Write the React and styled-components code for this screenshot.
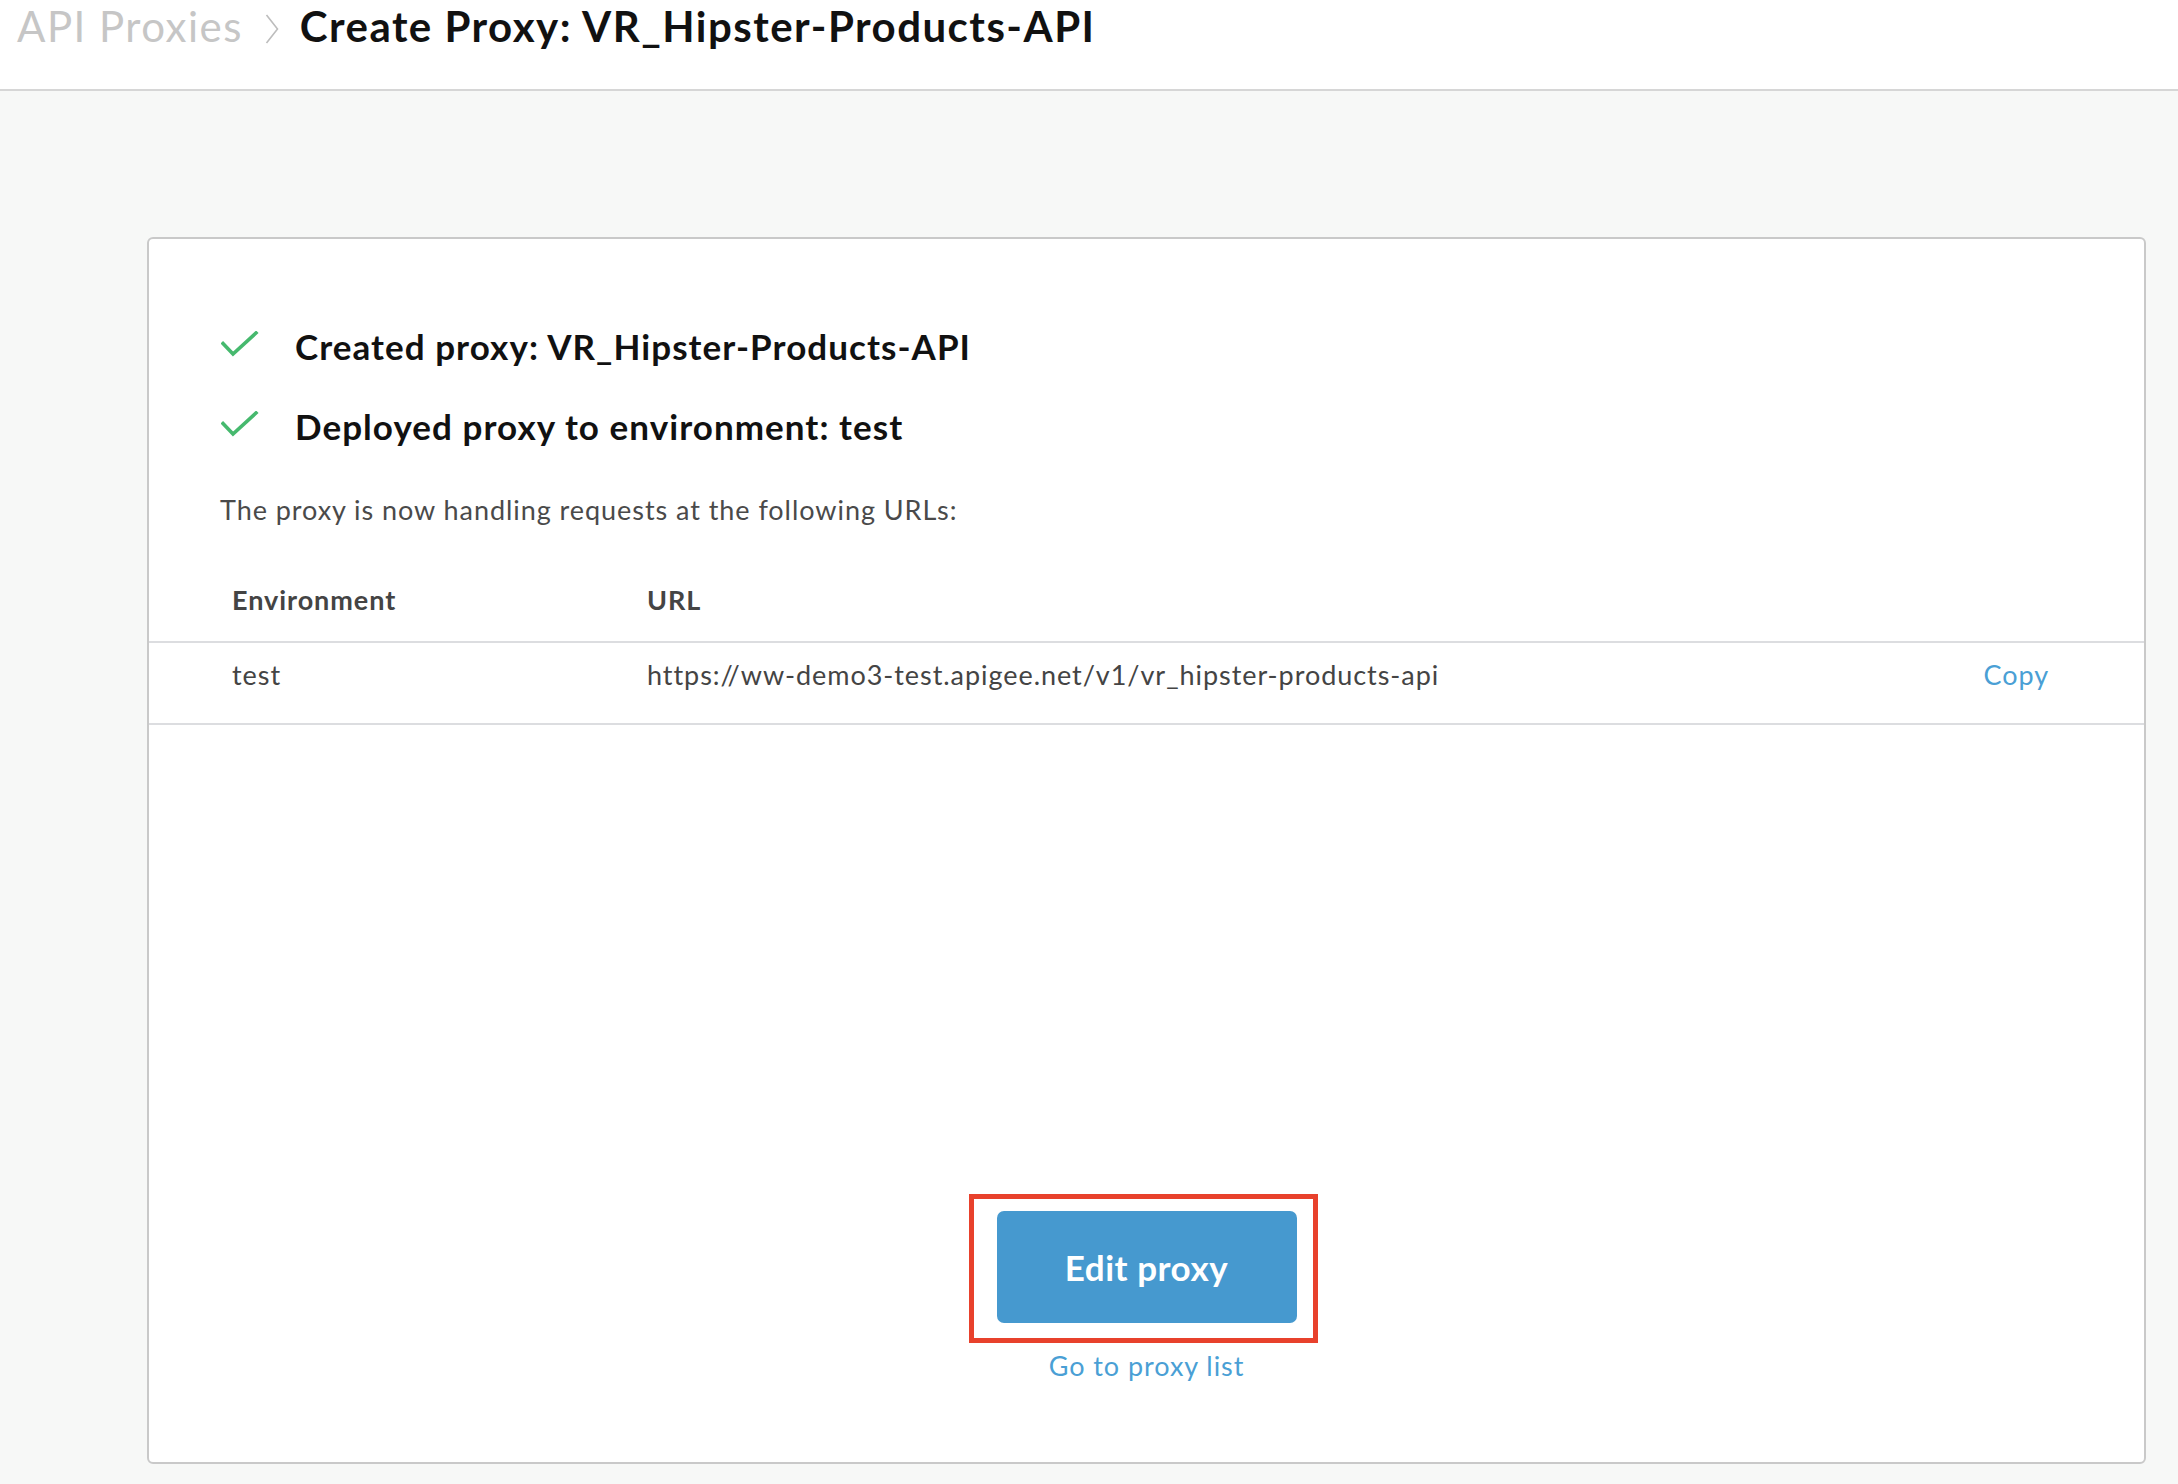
import React from 'react';
import styled, { createGlobalStyle } from 'styled-components';

const GlobalStyle = createGlobalStyle`
  html, body {
    margin: 0;
    padding: 0;
    background: #f7f8f7;
    font-family: Lato, "Open Sans", "Liberation Sans", sans-serif;
  }
  * { box-sizing: border-box; }
`;

const Page = styled.div`
  min-height: 1484px;
  display: flex;
  flex-direction: column;
`;

const Header = styled.header`
  height: 91px;
  background: #fff;
  border-bottom: 2px solid #d6d6d6;
  padding: 1px 0 0 17px;
  display: flex;
  align-items: flex-start;
`;

const Crumb = styled.span`
  font-size: 42px;
  line-height: 1.2;
  letter-spacing: 0.035em;
  font-weight: ${p => (p.current ? 700 : 400)};
  color: ${p => (p.current ? '#111' : '#c6c6c6')};
  white-space: nowrap;
`;

const Chevron = styled.svg`
  width: 14px;
  height: 30px;
  margin: 13px 21px 0 22px;
  flex: none;
`;

const Card = styled.section`
  margin: 146px 32px 21px 147px;
  height: 1227px;
  background: #fff;
  border: 2px solid #c9c9c9;
  border-radius: 6px;
  display: flex;
  flex-direction: column;
`;

const Status = styled.div`
  padding: 83px 0 0 71px;
  display: flex;
  flex-direction: column;
  gap: 32px;
`;

const StatusRow = styled.div`
  display: flex;
  align-items: center;
  gap: 34px;
`;

const Check = styled.svg`
  width: 40px;
  height: 30px;
  flex: none;
  margin-left: 1px;
`;

const StatusText = styled.span`
  font-size: 35px;
  line-height: 48px;
  letter-spacing: 0.03em;
  font-weight: 700;
  color: #111;
`;

const Note = styled.p`
  margin: 42px 0 0 71px;
  font-size: 27px;
  line-height: 36px;
  letter-spacing: 0.035em;
  color: #4a4a4a;
`;

const Table = styled.div`
  margin-top: 30px;
`;

const Row = styled.div`
  display: grid;
  grid-template-columns: 415px 1fr auto;
  padding: ${p => (p.head ? '24px 95px 23px 83px' : '14px 95px 30px 83px')};
  border-bottom: 2px solid #dcdde0;
  font-size: 27px;
  line-height: 36px;
  letter-spacing: 0.035em;
  font-weight: ${p => (p.head ? 700 : 400)};
  color: #444;
`;

const Link = styled.a`
  color: #4a9fd5;
  text-decoration: none;
  cursor: pointer;
  font-size: 27px;
  line-height: 36px;
  letter-spacing: 0.035em;
`;

const Actions = styled.div`
  margin-top: auto;
  padding-bottom: 78px;
  display: flex;
  flex-direction: column;
  align-items: center;
`;

const Highlight = styled.div`
  border: 5px solid #e8412c;
  padding: 12px 16px 15px 23px;
  margin-right: 7px;
  margin-bottom: 5px;
`;

const Button = styled.button`
  width: 300px;
  height: 112px;
  border: none;
  border-radius: 7px;
  background: #4699cf;
  color: #fff;
  font-family: inherit;
  font-size: 35px;
  letter-spacing: 0.015em;
  font-weight: 700;
  display: flex;
  align-items: center;
  justify-content: center;
  cursor: pointer;
`;

const CheckIcon = () => (
  <Check viewBox="0 0 40 30">
    <path d="M2 12.5 L12 23 L35 2" fill="none" stroke="#46b96e" strokeWidth="3.6" strokeLinecap="square" />
  </Check>
);

export default function App() {
  return (
    <Page>
      <GlobalStyle />
      <Header>
        <Crumb>API Proxies</Crumb>
        <Chevron viewBox="0 0 14 30">
          <path d="M1.5 1 L12.5 15 L1.5 29" fill="none" stroke="#bdbdbd" strokeWidth="1.6" />
        </Chevron>
        <Crumb current>Create Proxy: VR_Hipster-Products-API</Crumb>
      </Header>
      <Card>
        <Status>
          <StatusRow>
            <CheckIcon />
            <StatusText>Created proxy: VR_Hipster-Products-API</StatusText>
          </StatusRow>
          <StatusRow>
            <CheckIcon />
            <StatusText>Deployed proxy to environment: test</StatusText>
          </StatusRow>
        </Status>
        <Note>The proxy is now handling requests at the following URLs:</Note>
        <Table>
          <Row head>
            <span>Environment</span>
            <span>URL</span>
            <span />
          </Row>
          <Row>
            <span>test</span>
            <span>https://ww-demo3-test.apigee.net/v1/vr_hipster-products-api</span>
            <Link>Copy</Link>
          </Row>
        </Table>
        <Actions>
          <Highlight>
            <Button>Edit proxy</Button>
          </Highlight>
          <Link>Go to proxy list</Link>
        </Actions>
      </Card>
    </Page>
  );
}
